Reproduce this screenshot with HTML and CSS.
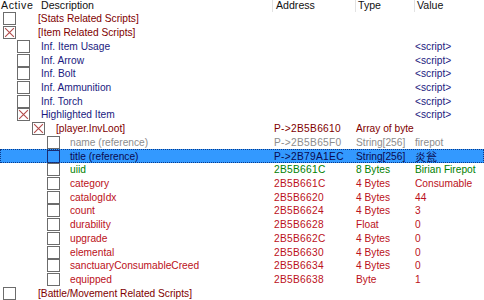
FILE: index.html
```html
<!DOCTYPE html>
<html lang="en">
<head>
  <meta charset="UTF-8">
  <meta name="viewport" content="width=device-width, initial-scale=1.0">
  <title>Cheat Table</title>
  <link rel="stylesheet" href="styles.css">
</head>
<body>

  <div class="table">
    <div class="head">
      <div class="hcell active">Active</div>
      <div class="hcell desc">Description</div>
      <div class="hcell addr">Address</div>
      <div class="hcell type">Type</div>
      <div class="hcell value">Value</div>
    </div>

    <div class="row script">
      <div class="cell lv0"><span class="box"></span><span class="label">[Stats Related Scripts]</span></div>
      <div class="cell"></div><div class="cell"></div><div class="cell"></div>
    </div>
    <div class="row script">
      <div class="cell lv0"><span class="box on"><svg viewBox="0 0 10 10"><path d="M1 1L9 9M9 1L1 9"/></svg></span><span class="label">[Item Related Scripts]</span></div>
      <div class="cell"></div><div class="cell"></div><div class="cell"></div>
    </div>
    <div class="row navy">
      <div class="cell lv1"><span class="box"></span><span class="label">Inf. Item Usage</span></div>
      <div class="cell"></div><div class="cell"></div><div class="cell val">&lt;script&gt;</div>
    </div>
    <div class="row navy">
      <div class="cell lv1"><span class="box"></span><span class="label">Inf. Arrow</span></div>
      <div class="cell"></div><div class="cell"></div><div class="cell val">&lt;script&gt;</div>
    </div>
    <div class="row navy">
      <div class="cell lv1"><span class="box"></span><span class="label">Inf. Bolt</span></div>
      <div class="cell"></div><div class="cell"></div><div class="cell val">&lt;script&gt;</div>
    </div>
    <div class="row navy">
      <div class="cell lv1"><span class="box"></span><span class="label">Inf. Ammunition</span></div>
      <div class="cell"></div><div class="cell"></div><div class="cell val">&lt;script&gt;</div>
    </div>
    <div class="row navy">
      <div class="cell lv1"><span class="box"></span><span class="label">Inf. Torch</span></div>
      <div class="cell"></div><div class="cell"></div><div class="cell val">&lt;script&gt;</div>
    </div>
    <div class="row navy">
      <div class="cell lv1"><span class="box on"><svg viewBox="0 0 10 10"><path d="M1 1L9 9M9 1L1 9"/></svg></span><span class="label">Highlighted Item</span></div>
      <div class="cell"></div><div class="cell"></div><div class="cell val">&lt;script&gt;</div>
    </div>
    <div class="row script">
      <div class="cell lv2"><span class="box on"><svg viewBox="0 0 10 10"><path d="M1 1L9 9M9 1L1 9"/></svg></span><span class="label">[player.InvLoot]</span></div>
      <div class="cell mono">P-&gt;2B5B6610</div><div class="cell">Array of byte</div><div class="cell"></div>
    </div>
    <div class="row gray">
      <div class="cell lv3"><span class="box"></span><span class="label">name (reference)</span></div>
      <div class="cell mono">P-&gt;2B5B65F0</div><div class="cell">String[256]</div><div class="cell">firepot</div>
    </div>
    <div class="row navy selected">
      <div class="cell lv3"><span class="box"></span><span class="label">title (reference)</span></div>
      <div class="cell mono">P-&gt;2B79A1EC</div><div class="cell">String[256]</div><div class="cell cjk">炎瓮</div>
    </div>
    <div class="row green">
      <div class="cell lv3"><span class="box"></span><span class="label">uiid</span></div>
      <div class="cell mono">2B5B661C</div><div class="cell">8 Bytes</div><div class="cell">Birian Firepot</div>
    </div>
    <div class="row red">
      <div class="cell lv3"><span class="box"></span><span class="label">category</span></div>
      <div class="cell mono">2B5B661C</div><div class="cell">4 Bytes</div><div class="cell">Consumable</div>
    </div>
    <div class="row red">
      <div class="cell lv3"><span class="box"></span><span class="label">catalogIdx</span></div>
      <div class="cell mono">2B5B6620</div><div class="cell">4 Bytes</div><div class="cell">44</div>
    </div>
    <div class="row red">
      <div class="cell lv3"><span class="box"></span><span class="label">count</span></div>
      <div class="cell mono">2B5B6624</div><div class="cell">4 Bytes</div><div class="cell">3</div>
    </div>
    <div class="row red">
      <div class="cell lv3"><span class="box"></span><span class="label">durability</span></div>
      <div class="cell mono">2B5B6628</div><div class="cell">Float</div><div class="cell">0</div>
    </div>
    <div class="row red">
      <div class="cell lv3"><span class="box"></span><span class="label">upgrade</span></div>
      <div class="cell mono">2B5B662C</div><div class="cell">4 Bytes</div><div class="cell">0</div>
    </div>
    <div class="row red">
      <div class="cell lv3"><span class="box"></span><span class="label">elemental</span></div>
      <div class="cell mono">2B5B6630</div><div class="cell">4 Bytes</div><div class="cell">0</div>
    </div>
    <div class="row red">
      <div class="cell lv3"><span class="box"></span><span class="label">sanctuaryConsumableCreed</span></div>
      <div class="cell mono">2B5B6634</div><div class="cell">4 Bytes</div><div class="cell">0</div>
    </div>
    <div class="row red">
      <div class="cell lv3"><span class="box"></span><span class="label">equipped</span></div>
      <div class="cell mono">2B5B6638</div><div class="cell">Byte</div><div class="cell">1</div>
    </div>
    <div class="row script">
      <div class="cell lv0"><span class="box"></span><span class="label">[Battle/Movement Related Scripts]</span></div>
      <div class="cell"></div><div class="cell"></div><div class="cell"></div>
    </div>
  </div>

</body>
</html>
```

FILE: styles.css
```css
body {
  margin: 0;
  background-color: #fff;
  font-family: "Liberation Sans", Arial, sans-serif;
  font-size: 10.2px;
  overflow: hidden;
}
.table {
  width: 484px;
}
.head {
  display: grid;
  grid-template-columns: 38px 234px 83px 59px 1fr;
  height: 12px;
  color: #111;
  font-size: 10.6px;
}
.hcell {
  line-height: 11px;
  padding-left: 2px;
  white-space: nowrap;
}
.hcell.active {
  padding-left: 1px;
  letter-spacing: 0.6px;
}
.hcell.desc {
  padding-left: 3px;
}
.hcell.addr,
.hcell.type,
.hcell.value {
  border-left: 1px solid #e2e2e2;
}
.hcell.addr {
  padding-left: 3px;
}
.row {
  display: grid;
  grid-template-columns: 272px 83px 59px 1fr;
  height: 13.73px;
  align-items: center;
  white-space: nowrap;
}
.cell {
  display: flex;
  align-items: center;
  height: 100%;
  padding-left: 1px;
  overflow: hidden;
}
.cell.mono {
  padding-left: 2px;
  letter-spacing: 0.3px;
}
.box {
  flex: none;
  width: 11px;
  height: 11px;
  border: 1px solid #6c6c6c;
  background-color: #fff;
  display: flex;
}
.box svg {
  width: 11px;
  height: 11px;
  stroke: #b24a4a;
  stroke-width: 1;
}
.lv0 .box { margin-left: 2px; }
.lv0 .label { margin-left: 22px; }
.lv1 .box { margin-left: 16px; }
.lv1 .label { margin-left: 11px; }
.lv2 .box { margin-left: 31px; }
.lv2 .label { margin-left: 11px; }
.lv3 .box { margin-left: 46px; }
.lv3 .label { margin-left: 10px; }

.script { color: #800000; }
.navy { color: #1a1a80; }
.gray { color: #8c8c8c; }
.green { color: #008000; }
.red { color: #bb1020; }
.val { color: #1a1a80; }

.selected {
  background-color: #3399ff;
  outline: 1px dotted #0a3a8a;
  outline-offset: -1px;
  color: #0a0a50;
}
.selected .box {
  border-color: #1a2a70;
  background-color: #3399ff;
}
.cjk {
  font-family: "Noto Sans CJK SC", sans-serif;
  font-size: 11px;
}
```
